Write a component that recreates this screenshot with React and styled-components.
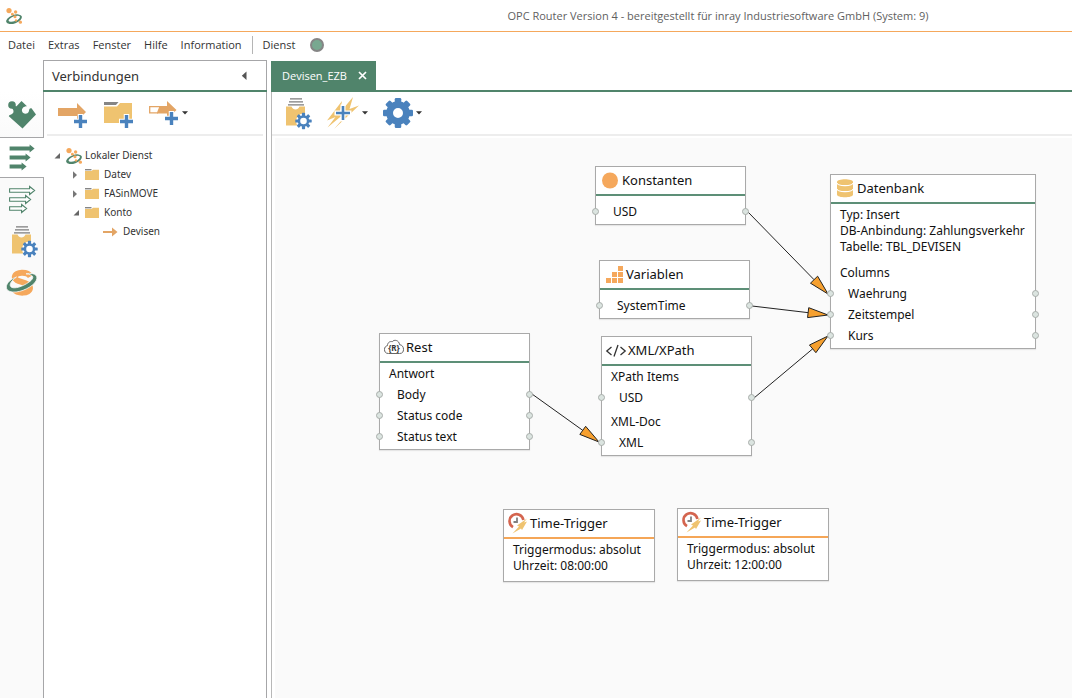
import React, { useState } from "react";
import styled, { createGlobalStyle } from "styled-components";

const GREEN = "#50846b";
const ORANGE = "#f5a85c";
const SAND = "#efc370";
const ARROW = "#e3a565";
const BLUE = "#4a82bd";
const LINE = "#a6a6a8";

const GlobalStyle = createGlobalStyle`
  * { box-sizing: border-box; }
  html, body, #root { height: 100%; }
  body {
    margin: 0;
    background: #fff;
    color: #333;
    font-family: "Noto Sans", "Open Sans", sans-serif;
    font-size: 11px;
  }
  button {
    font: inherit;
    color: inherit;
    background: none;
    border: 0;
    padding: 0;
    margin: 0;
  }
  svg { display: block; flex: none; overflow: visible; }
`;

/* ---------- frame ---------- */

const Window = styled.div`
  display: flex;
  flex-direction: column;
  min-height: 100%;
`;

const TitleBar = styled.header`
  display: flex;
  align-items: center;
  height: 32px;
  padding-left: 6px;
  border-bottom: 1px solid ${ORANGE};
`;

const WindowTitle = styled.h1`
  flex: 1;
  margin: 0;
  padding-left: 342px;
  text-align: center;
  font-family: "Open Sans", "Noto Sans", sans-serif;
  font-size: 11px;
  font-weight: 400;
  color: #5f5f5f;
`;

const MenuBar = styled.nav`
  display: flex;
  align-items: center;
  height: 28px;
  padding: 0 8px 3px;
  gap: 13px;
  font-family: "Open Sans", "Noto Sans", sans-serif;
`;

const MenuSeparator = styled.span`
  width: 1px;
  height: 18px;
  margin: 0 -3px;
  background: #b5b5b5;
`;

const ServiceLamp = styled.span`
  width: 14px;
  height: 14px;
  margin-left: 2px;
  border-radius: 50%;
  border: 2px solid #858585;
  background: #78a890;
`;

const Main = styled.div`
  display: flex;
  flex: 1;
`;

/* ---------- side rail ---------- */

const Rail = styled.nav`
  display: flex;
  flex-direction: column;
  width: 43px;
  padding-top: 32px;
  background: linear-gradient(#fff 32px, #fafafa 78px);
`;

const RailButton = styled.button`
  display: flex;
  align-items: center;
  justify-content: center;
  height: ${(p) => (p.$selected ? "41px" : "42px")};
  margin-right: ${(p) => (p.$selected ? "-1px" : "0")};
  background: ${(p) => (p.$selected ? "#fff" : "transparent")};
  border-top: ${(p) => (p.$selected ? `1px solid ${LINE}` : "0")};
  border-bottom: ${(p) => (p.$selected ? `1px solid ${LINE}` : "0")};
  position: relative;
  z-index: ${(p) => (p.$selected ? 1 : 0)};

  &:first-child { height: 45px; }
`;

/* ---------- connections panel ---------- */

const Panel = styled.aside`
  display: flex;
  flex-direction: column;
  width: 224px;
  border: 1px solid ${LINE};
  border-bottom: 0;
`;

const PanelHeader = styled.div`
  display: flex;
  align-items: center;
  justify-content: space-between;
  height: 31px;
  margin: 0 -1px;
  padding: 0 20px 0 9px;
  border-bottom: 2px solid ${GREEN};
`;

const PanelTitle = styled.h2`
  margin: 0;
  font-size: 13px;
  font-weight: 400;
`;

const Toolbar = styled.div`
  display: flex;
  align-items: center;
  height: 44px;
  gap: ${(p) => p.$gap}px;
  margin: 0 ${(p) => p.$inset}px;
  padding-left: ${(p) => p.$start}px;
  border-bottom: 2px solid #ededed;
`;

const ToolButton = styled.button`
  display: flex;
  align-items: center;
  gap: 3px;
`;

const Tree = styled.ul`
  list-style: none;
  margin: 0;
  padding: 10px 0 0;
`;

const TreeRow = styled.button`
  display: flex;
  align-items: center;
  width: 100%;
  height: 19px;
  padding-left: ${(p) => 10 + p.$level * 19}px;
  font-size: 10px;
  line-height: 19px;
`;

const Expander = styled.span`
  display: flex;
  width: 7px;
  margin-right: 5px;
`;

const TreeIcon = styled.span`
  display: flex;
  align-items: center;
  width: 16px;
  height: 16px;
  margin-right: 3px;
`;

/* ---------- editor ---------- */

const Editor = styled.main`
  display: flex;
  flex-direction: column;
  flex: 1;
  min-width: 0;
  margin-left: 4px;
`;

const TabStrip = styled.div`
  display: flex;
  height: 32px;
  padding-top: 1px;
  border-bottom: 2px solid ${GREEN};
`;

const Tab = styled.div`
  display: flex;
  align-items: center;
  justify-content: space-between;
  width: 105px;
  padding: 0 9px 0 11px;
  background: ${GREEN};
  color: #fff;
  font-family: "Open Sans", "Noto Sans", sans-serif;
  font-size: 11px;
`;

const EditorBody = styled.div`
  display: flex;
  flex-direction: column;
  flex: 1;
  border-left: 1px solid #b8b8b8;
`;

const Canvas = styled.div`
  position: relative;
  flex: 1;
  margin: 2px 0 0 3px;
  background: #fafafa;
  overflow: hidden;
`;

const Wires = styled.svg`
  position: absolute;
  inset: 0;
  width: 100%;
  height: 100%;
`;

const Node = styled.section`
  position: absolute;
  left: ${(p) => p.$x}px;
  top: ${(p) => p.$y}px;
  width: ${(p) => p.$w}px;
  padding-bottom: ${(p) => (p.$trigger ? 0 : 2)}px;
  background: #fff;
  border: 1px solid #a9a9a9;
  box-shadow: 0 1px 1px rgba(0, 0, 0, 0.08);
  color: #111;
  font-size: 12px;
`;

const NodeHeader = styled.div`
  display: flex;
  align-items: center;
  gap: 2px;
  height: 29px;
  padding: 0 0 2px 4px;
  border-bottom: 2px solid ${(p) => (p.$trigger ? "#f5a657" : "#5d8f77")};
`;

const NodeTitle = styled.h3`
  margin: 0;
  font-size: 13px;
  font-weight: 400;
`;

const NodeInfo = styled.div`
  padding: 3px 9px 7px;
  line-height: 16px;
  white-space: nowrap;
`;

const Group = styled.div`
  & + & { padding-top: 3px; }
`;

const LooseGroup = styled(Group)`
  padding-top: 5px;
`;

const GroupName = styled.div`
  padding-left: 9px;
  line-height: 21px;
`;

const Item = styled.div`
  position: relative;
  padding-left: 17px;
  line-height: 21px;
`;

const Port = styled.span`
  position: absolute;
  top: 7px;
  ${(p) => p.$side}: -4px;
  width: 7px;
  height: 7px;
  border-radius: 50%;
  border: 1px solid #a9aeab;
  background: #dbe4e0;
`;

/* ---------- icons ---------- */

const Logo = () => (
  <svg width="16" height="16" viewBox="0 0 16 16" aria-hidden="true">
    <g transform="rotate(-20 8 11.200)">
      <path
        fillRule="evenodd"
        fill={GREEN}
        d="M-.3 11.200a8.300 4.200 0 1 0 16.600 0a8.300 4.200 0 1 0-16.600 0zM2.400 10.900a6 2.400 0 1 0 12 0a6 2.400 0 1 0-12 0z"
      />
    </g>
    <circle cx="3" cy="2.600" r="2.600" fill={ORANGE} />
    <circle cx="9.600" cy="4" r="1.700" fill={ORANGE} />
    <circle cx="6.400" cy="6.200" r="1.400" fill={ORANGE} />
    <circle cx="9" cy="8.800" r="1.500" fill={ORANGE} />
    <circle cx="14.400" cy="14.200" r="1.600" fill={ORANGE} />
    <circle cx="10" cy="12.400" r="1.200" fill={ORANGE} />
  </svg>
);

const Plus = ({ x, y, r = 6.5 }) => (
  <g>
    <path d={`M${x - r - 1} ${y}h${2 * r + 2}M${x} ${y - r - 1}v${2 * r + 2}`} stroke="#fff" strokeWidth="5.5" />
    <path d={`M${x - r} ${y}h${2 * r}M${x} ${y - r}v${2 * r}`} stroke={BLUE} strokeWidth="3.4" />
  </g>
);

const Cog = ({ cx, cy, r, hole, tooth, ring }) => (
  <g transform={`translate(${cx} ${cy})`}>
    {[0, 45, 90, 135, 180, 225, 270, 315].map((a) => (
      <rect key={a} x={-tooth / 2} y={-r} width={tooth} height={r - hole} rx={tooth / 5} transform={`rotate(${a})`} fill={BLUE} />
    ))}
    <circle r={hole + ring / 2} fill="#fff" stroke={BLUE} strokeWidth={ring} />
  </g>
);

const FolderCog = ({ lead = 0 }) => (
  <svg width={26 + lead} height="31" viewBox={`${-lead} 0 ${26 + lead} 31`} aria-hidden="true">
    <path d="M4 .8h12M3 3.800h14M2 6.800h16" stroke="#7d7d7d" strokeWidth="1.300" />
    <path d="M0 8.500h5.500c1.500 4 6.500 4 8 0H19V27.500H0z" fill={SAND} />
    <circle cx="17.500" cy="23" r="7.500" fill="#fff" />
    <Cog cx={17.5} cy={23} r={8.2} hole={3.3} tooth={3.2} ring={2.5} />
  </svg>
);

const Puzzle = () => (
  <svg width="28" height="28" viewBox="0 0 28 28" aria-hidden="true">
    <circle cx="4" cy="4" r="3.800" fill={GREEN} />
    <path
      fill={GREEN}
      d="M6.500 5L8.500 5.200L13.500 0L19 5.200C15.500 5.200 13.600 7.500 14 10C14.600 13.200 19.500 13.800 20.800 10.500C21.300 9 21 7.300 23.500 7.300L28 13.500L14.500 27.500L.8 15.200C1.600 13.400 4.800 13.600 5.400 11.300C5.700 10 5.400 8.500 4 7.500z"
    />
  </svg>
);

/* Right-pointing arrow, 8 high, with a shaft of the given thickness. */
const flow = (y, w, shaft) => {
  const wing = (8 - shaft) / 2;
  return `M.6 ${y + wing}h${w - 6}v${-wing}l5 4l-5 4v${-wing}h${6 - w}z`;
};

const Flows = ({ outline }) => (
  <svg width="26" height="27" viewBox="0 0 26 27" aria-hidden="true">
    {[
      [0.5, 26],
      [9.5, 22],
      [18.5, 18],
    ].map(([y, w]) => (
      <path
        key={y}
        d={flow(y, w, outline ? 3.4 : 4)}
        fill={outline ? "#fff" : GREEN}
        stroke={outline ? GREEN : "none"}
        strokeWidth="1.100"
      />
    ))}
  </svg>
);

const Orbit = () => (
  <svg width="32" height="26" viewBox="0 0 32 26" aria-hidden="true">
    <path
      d="M24.500 6.500C21.500 1.300 9.500 1.500 8.800 7C8.500 12.500 24 11.500 24 18C23.500 24 11.500 24 8 19"
      fill="none"
      stroke={ORANGE}
      strokeWidth="6"
    />
    <path
      d="M20 3.800C30 2 33.500 6.500 29 12.500C23.500 19 11 23.800 4 21.500C-3 19 .5 10.500 10.500 7C4 11.500 2.500 16 6 17.500C10.500 19 20 15 25 10.500C28.500 7 27 4.600 20 3.800Z"
      fill={GREEN}
      stroke="#fafafa"
      strokeWidth=".8"
    />
  </svg>
);

const ConnectionAdd = () => (
  <svg width="30" height="30" viewBox="0 0 30 30" aria-hidden="true">
    <path d="M0 10h19V5l9 9l-9 9v-5H0z" fill={ARROW} />
    <Plus x={22.5} y={23.5} />
  </svg>
);

const FolderAdd = () => (
  <svg width="30" height="30" viewBox="0 0 30 30" aria-hidden="true">
    <path d="M1 7V4h14.500L13 7z" fill="#858585" />
    <path d="M1 8.500h13L17 5h12v20H1z" fill={SAND} />
    <Plus x={23.5} y={23.5} />
  </svg>
);

const TemplateAdd = () => (
  <svg width="31" height="30" viewBox="0 0 31 30" aria-hidden="true">
    <path d="M11 8h8V3l9.500 9l-9.500 9v-5.500H9z" fill={ARROW} />
    <path d="M12 8.700H1.700v6.200H9.500z" fill="#fff" stroke={ARROW} strokeWidth="1.300" />
    <Plus x={23.5} y={20.5} />
  </svg>
);

const BoltsAdd = () => (
  <svg width="32" height="32" viewBox="0 0 32 32" aria-hidden="true">
    <path d="M15 4L0 23.500l8.500-3.500L.5 30.500L18 16l-5.500 1z" fill={SAND} />
    <path d="M26 0L13 15.500L17.500 20L7 32L32 8.500L22.500 12z" fill={SAND} />
    <path d="M7.500 16h17M16 7.500v17" stroke="#fff" strokeWidth="5" />
    <path d="M9 16h14M16 9v14" stroke={BLUE} strokeWidth="2.600" />
  </svg>
);

const BigCog = () => (
  <svg width="30" height="30" viewBox="0 0 30 30" aria-hidden="true">
    <Cog cx={15} cy={15} r={15} hole={5} tooth={6.5} ring={6.8} />
  </svg>
);

const Caret = () => (
  <svg width="6" height="4" viewBox="0 0 6 4" aria-hidden="true">
    <path d="M0 .3h6L3 3.500z" fill="#333" />
  </svg>
);

const Collapse = () => (
  <svg width="6" height="10" viewBox="0 0 6 10" aria-hidden="true">
    <path d="M5.500 .5v8.500L.8 4.700z" fill="#555" />
  </svg>
);

const Open = () => (
  <svg width="7" height="7" viewBox="0 0 7 7" aria-hidden="true">
    <path d="M6 1v5.500H.5z" fill="#666" />
  </svg>
);

const Closed = () => (
  <svg width="7" height="8" viewBox="0 0 7 8" aria-hidden="true">
    <path d="M0 .3v7.400l4-3.700z" fill="#777" />
  </svg>
);

const Folder = () => (
  <svg width="14" height="11" viewBox="0 0 14 11" aria-hidden="true">
    <path d="M0 .7h6.500" stroke="#858585" strokeWidth="1.400" />
    <path d="M0 2h6.500L8 .7h6V11H0z" fill={SAND} />
  </svg>
);

const SmallArrow = () => (
  <svg width="14" height="10" viewBox="0 0 14 10" aria-hidden="true">
    <path d="M-1 3.900h9V.5L13.500 5L8 9.500V6.100h-9z" fill={ARROW} />
  </svg>
);

const Close = () => (
  <svg width="9" height="9" viewBox="0 0 9 9" aria-hidden="true">
    <path d="M1 1l7 7M8 1l-7 7" stroke="#fff" strokeWidth="1.700" />
  </svg>
);

const nodeIcons = {
  rest: (
    <>
      <path
        d="M4.500 16.500C1.500 16.500 .5 14.700 .5 12.500C.5 10.300 1.700 9 3.400 8.700C3.500 5.500 6 4 8.300 4.700C10 2.200 15 3 15.600 7.700C18 7.800 19.500 9.800 19.500 12.300C19.500 14.800 18.500 16.500 15.500 16.500Z"
        fill="#fff"
        stroke="#666"
      />
      <text x="10" y="14" textAnchor="middle" fontSize="8" fontWeight="700" fill="#333">{"{R}"}</text>
    </>
  ),
  constants: <circle cx="10" cy="10.500" r="8" fill={ORANGE} />,
  variables: (
    <path
      fill={ORANGE}
      d="M2 14h5v5H2zM8 14h5v5H8zM14 14h5v5h-5zM8 8h5v5H8zM14 8h5v5h-5zM14 2h5v5h-5z"
    />
  ),
  xml: (
    <path d="M5.500 7L.8 11l4.700 4M14.500 7l4.700 4l-4.700 4M12 5L8 16.500" fill="none" stroke="#333" strokeWidth="1.300" />
  ),
  database: (
    <>
      <path d="M2 4C2 .4 18 .4 18 4v12.500C18 20.200 2 20.200 2 16.500z" fill={SAND} />
      <path d="M2 5c.5 3.500 15.500 3.500 16 0M2 11c.5 3.500 15.500 3.500 16 0" fill="none" stroke="#fff" strokeWidth="1.200" />
    </>
  ),
  clock: (
    <>
      <path d="M5 14.200A7 7 0 1 1 15.400 7" fill="none" stroke="#d4654f" strokeWidth="2.600" />
      <path d="M9 4.500V9H5.500" fill="none" stroke="#808080" strokeWidth="1.800" />
      <path d="M19 5.500L9 12.500l2 1L4.500 20.500l8.500-5l1 1.500L19 8.500l-3 1z" fill={SAND} />
    </>
  ),
};

/* ---------- data ---------- */

const railEntries = [
  ["Plug-ins", <Puzzle />],
  ["Verbindungen", <Flows />],
  ["Vorlagen", <Flows outline />],
  ["Projekte", <FolderCog lead={6} />],
  ["Status", <Orbit />],
];

const treeRows = [
  { level: 0, text: "Lokaler Dienst", icon: <Logo />, open: true },
  { level: 1, text: "Datev", icon: <Folder />, open: false },
  { level: 1, text: "FASinMOVE", icon: <Folder />, open: false },
  { level: 1, text: "Konto", icon: <Folder />, open: true },
  { level: 2, text: "Devisen", icon: <SmallArrow /> },
];

const nodes = [
  { id: "const", x: 320, y: 28, w: 151, icon: "constants", title: "Konstanten", loose: true, groups: [{ items: ["USD"] }] },
  { id: "vars", x: 324, y: 122, w: 151, icon: "variables", title: "Variablen", loose: true, groups: [{ items: ["SystemTime"] }] },
  {
    id: "rest", x: 104, y: 195, w: 151, icon: "rest", title: "Rest",
    groups: [{ name: "Antwort", items: ["Body", "Status code", "Status text"] }],
  },
  {
    id: "xml", x: 326, y: 198, w: 151, icon: "xml", title: "XML/XPath",
    groups: [{ name: "XPath Items", items: ["USD"] }, { name: "XML-Doc", items: ["XML"] }],
  },
  {
    id: "db", x: 555, y: 36, w: 206, icon: "database", title: "Datenbank",
    info: ["Typ: Insert", "DB-Anbindung: Zahlungsverkehr", "Tabelle: TBL_DEVISEN"],
    groups: [{ name: "Columns", items: ["Waehrung", "Zeitstempel", "Kurs"] }],
  },
  { id: "t8", x: 228, y: 371, w: 152, icon: "clock", title: "Time-Trigger", trigger: true, info: ["Triggermodus: absolut", "Uhrzeit: 08:00:00"] },
  { id: "t12", x: 402, y: 370, w: 152, icon: "clock", title: "Time-Trigger", trigger: true, info: ["Triggermodus: absolut", "Uhrzeit: 12:00:00"] },
];

const wires = [
  [473, 74, 553, 156],
  [477, 168, 553, 177],
  [479, 260, 553, 198],
  [257, 256, 324, 304],
];

/* A line with a narrow arrowhead whose tip touches the target port. */
function Wire({ from: [x1, y1], to: [x2, y2] }) {
  const d = Math.hypot(x2 - x1, y2 - y1);
  const ux = (x2 - x1) / d;
  const uy = (y2 - y1) / d;
  const bx = x2 - ux * 20;
  const by = y2 - uy * 20;
  const head = [
    [x2, y2],
    [bx - uy * 5, by + ux * 5],
    [bx + uy * 5, by - ux * 5],
  ];
  return (
    <g stroke="#222" strokeWidth="1">
      <line x1={x1} y1={y1} x2={bx} y2={by} />
      <polygon points={head.map((p) => p.join(",")).join(" ")} fill="#f6a02f" />
    </g>
  );
}

function FlowNode({ node }) {
  const Wrap = node.loose ? LooseGroup : Group;
  return (
    <Node $x={node.x} $y={node.y} $w={node.w} $trigger={node.trigger}>
      <NodeHeader $trigger={node.trigger}>
        <svg width="20" height="20" viewBox="0 0 20 20" aria-hidden="true">
          {nodeIcons[node.icon]}
        </svg>
        <NodeTitle>{node.title}</NodeTitle>
      </NodeHeader>
      {node.info && (
        <NodeInfo>
          {node.info.map((line) => (
            <div key={line}>{line}</div>
          ))}
        </NodeInfo>
      )}
      {(node.groups || []).map((group, i) => (
        <Wrap key={i}>
          {group.name && <GroupName>{group.name}</GroupName>}
          {group.items.map((item) => (
            <Item key={item}>
              <Port $side="left" />
              {item}
              <Port $side="right" />
            </Item>
          ))}
        </Wrap>
      ))}
    </Node>
  );
}

export default function App() {
  const [section, setSection] = useState("Verbindungen");
  return (
    <Window>
      <GlobalStyle />
      <TitleBar>
        <Logo />
        <WindowTitle>OPC Router Version 4 - bereitgestellt für inray Industriesoftware GmbH (System: 9)</WindowTitle>
      </TitleBar>
      <MenuBar>
        {["Datei", "Extras", "Fenster", "Hilfe", "Information"].map((m) => (
          <button key={m}>{m}</button>
        ))}
        <MenuSeparator />
        <button>Dienst</button>
        <ServiceLamp />
      </MenuBar>
      <Main>
        <Rail>
          {railEntries.map(([name, icon]) => (
            <RailButton key={name} aria-label={name} $selected={name === section} onClick={() => setSection(name)}>
              {icon}
            </RailButton>
          ))}
        </Rail>
        <Panel>
          <PanelHeader>
            <PanelTitle>Verbindungen</PanelTitle>
            <button aria-label="Einklappen"><Collapse /></button>
          </PanelHeader>
          <Toolbar $gap={15} $inset={3} $start={11}>
            <ToolButton aria-label="Neue Verbindung"><ConnectionAdd /></ToolButton>
            <ToolButton aria-label="Neuer Ordner"><FolderAdd /></ToolButton>
            <ToolButton aria-label="Neu aus Vorlage"><TemplateAdd /><Caret /></ToolButton>
          </Toolbar>
          <Tree>
            {treeRows.map((row) => (
              <li key={row.text}>
                <TreeRow $level={row.level}>
                  <Expander>{row.open === true ? <Open /> : row.open === false ? <Closed /> : null}</Expander>
                  <TreeIcon>{row.icon}</TreeIcon>
                  {row.text}
                </TreeRow>
              </li>
            ))}
          </Tree>
        </Panel>
        <Editor>
          <TabStrip>
            <Tab>
              Devisen_EZB
              <button aria-label="Schließen"><Close /></button>
            </Tab>
          </TabStrip>
          <EditorBody>
            <Toolbar $gap={15} $inset={0} $start={14}>
              <ToolButton aria-label="Projekt"><FolderCog /></ToolButton>
              <ToolButton aria-label="Neuer Trigger"><BoltsAdd /><Caret /></ToolButton>
              <ToolButton aria-label="Einstellungen"><BigCog /><Caret /></ToolButton>
            </Toolbar>
            <Canvas>
              <Wires aria-hidden="true">
                {wires.map(([a, b, c, d]) => (
                  <Wire key={`${a}-${b}`} from={[a, b]} to={[c, d]} />
                ))}
              </Wires>
              {nodes.map((n) => (
                <FlowNode key={n.id} node={n} />
              ))}
            </Canvas>
          </EditorBody>
        </Editor>
      </Main>
    </Window>
  );
}
